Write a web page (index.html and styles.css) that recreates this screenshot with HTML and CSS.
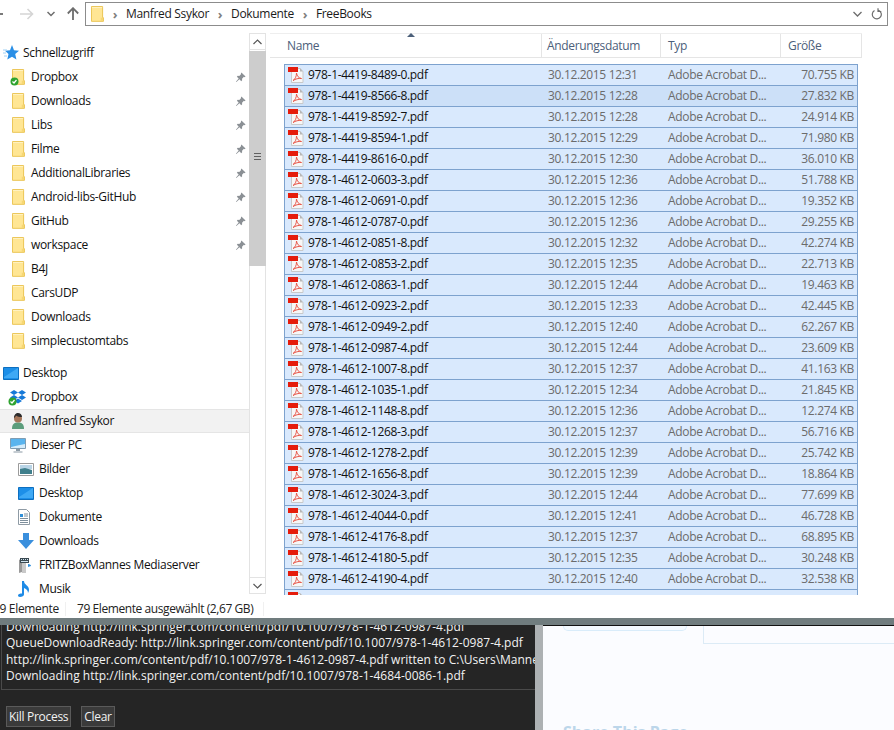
FILE: index.html
```html
<!DOCTYPE html>
<html lang="de">
<head>
<meta charset="utf-8">
<title>FreeBooks</title>
<link rel="stylesheet" href="styles.css">
</head>
<body>
<svg class="defs" width="0" height="0">
  <symbol id="folder" viewBox="0 0 14 17"><path d="M.5.5h12v12h.9v3.9H.5z" fill="#ffe694" stroke="#e9c04b"/><path d="M1 1h11v1H1z" fill="#fff3c4"/><path d="M10.5 12.5h2.6v3.4h-2.6z" fill="#f6d774"/></symbol>
  <symbol id="pdf" viewBox="0 0 16 16"><path d="M3.500 1.500h8.500l3 3v11h-11.500z" fill="#f7f7f7" stroke="#c9c9c9"/><path d="M12 1l3 3.500h-3z" fill="#b5b5b5"/><path d="M0 0h10v5H0z" fill="#e51c0c"/><path d="M5 13.500c2-1 3.500-4 3.500-7.500.5 3 2 5 5 5.500-3-.4-6 .4-8.500 2z" fill="none" stroke="#e9574a" stroke-width="1"/></symbol>
  <symbol id="pin" viewBox="0 0 12 12"><path d="M7 .5l4.500 4.500-1 .6-.8-.3-2 2 .1 1.700-1 1-2-2L1.500 11 1 10.500l3-3.300-2-2 1-1 1.700.1 2-2-.3-.8z" fill="#8b9095"/></symbol>
  <symbol id="star" viewBox="0 0 16 16"><path d="M9 0l2 5.300 5 .4-3.800 3.400 1.200 5.400L9 11.700 4.300 14.500l1.200-5.400L2 5.700l5-.4z" fill="#2a8fe6"/><path d="M0 5h4M0 8h3M1 11h3" stroke="#9fd0f5"/></symbol>
  <symbol id="check" viewBox="0 0 9 9"><circle cx="4.500" cy="4.500" r="4" fill="#2fa32f"/><path d="M2.500 4.500l1.500 1.500 2.500-3" stroke="#fff" fill="none" stroke-width="1.200"/></symbol>
  <symbol id="desk" viewBox="0 0 16 14"><path d="M.5 1.500h15v12H.5z" fill="#1d8fe8" stroke="#0d6fc0"/><path d="M1 11L15 2v10H1z" fill="#3fa9f5"/></symbol>
  <symbol id="box" viewBox="0 0 16 15"><path d="M4 0l4 2.500L4 5 0 2.500zM12 0l4 2.500L12 5 8 2.500zM4 5l4 2.500L4 10 0 7.500zM12 5l4 2.500L12 10 8 7.500zM8 8.500l4 2.500-4 2.500L4 11z" fill="#1679d8"/></symbol>
  <symbol id="user" viewBox="0 0 16 16"><path d="M2 16c0-5 2-6.500 6-6.500s6 1.500 6 6.500z" fill="#5c9d7c"/><circle cx="8" cy="5.500" r="4" fill="#a5765a"/><path d="M4 5c0-3.500 2-5 4-5s4 1.500 4 4c-2 0-5 0-6-1.500-.4 1-1 2-2 2.500z" fill="#2b2b2b"/></symbol>
  <symbol id="pc" viewBox="0 0 16 15"><path d="M.5.500h15v10H.5z" fill="#d4ecfb" stroke="#7f9db3"/><path d="M1 1h14v5C10 7 5 8 1 9z" fill="#59b4ee"/><path d="M6 11h4v2H6zM3.500 13.500h9v1h-9z" fill="#8b9aa5"/></symbol>
  <symbol id="pic" viewBox="0 0 16 13"><path d="M.5.500h15v12H.5z" fill="#fff" stroke="#9b9b9b"/><path d="M2 2h12v4H2z" fill="#b9d4e6"/><path d="M2 6l5-1 7 2v4H2z" fill="#3f7f8c"/></symbol>
  <symbol id="doc" viewBox="0 0 12 16"><path d="M.5.500h8l3 3v12H.5z" fill="#fff" stroke="#8f9ba5"/><path d="M2 5h3v3H2z" fill="#2f8fd8"/><path d="M6 5h4M6 7h4M2 9.500h8M2 11.500h8M2 13.500h8" stroke="#7e8f9c"/></symbol>
  <symbol id="down" viewBox="0 0 16 16"><path d="M5 0h6v7h5l-8 9-8-9h5z" fill="#3a8fdd"/></symbol>
  <symbol id="media" viewBox="0 0 14 17"><path d="M1 3l3-2v14l-3 1z" fill="#9a9a9a"/><path d="M4 1h4v15H4z" fill="#c9c9c9"/><path d="M2 1h9v5H2z" fill="#3b4a52"/><path d="M3 2h1v1H3zM5 2h1v1H5zM7 2h1v1H7zM9 2h1v1H9zM3 4h7v1H3z" fill="#cfe3ee"/><path d="M10 7c2 0 3 1 3 2l-3 1z" fill="#2e8fdc"/></symbol>
  <symbol id="note" viewBox="0 0 12 16"><path d="M4 0h2c0 4 5 4 5 9 0 1-.5 2-1 3 0-3-2-4-4-5v6.500c0 1.500-2 2.500-4 2.500-1.500 0-2-1-2-1.500C0 13 2 12.500 4 12.500z" fill="#1f8be6"/></symbol>
</svg>

<div class="window">
  <header class="toolbar">
    <div class="nav-buttons">
      <span class="back-stub"></span>
      <svg class="tb-icon tb-forward" width="14" height="12" viewBox="0 0 14 12"><path d="M0 6h12M7.500 1L12.500 6l-5 5" fill="none" stroke="#d5d5d5" stroke-width="1.600"/></svg>
      <svg class="tb-icon tb-recent" width="8" height="6" viewBox="0 0 8 6"><path d="M.5 1L4 4.500 7.500 1" fill="none" stroke="#6d6d6d" stroke-width="1.500"/></svg>
      <svg class="tb-icon tb-up" width="12" height="13" viewBox="0 0 12 13"><path d="M6 13V1.500M.8 6.500L6 1.200l5.200 5.300" fill="none" stroke="#6d6d6d" stroke-width="1.800"/></svg>
    </div>
    <div class="address">
      <svg class="addr-folder" width="13" height="16"><use href="#folder"/></svg>
      <span class="crumb-sep">›</span><span class="crumb">Manfred Ssykor</span>
      <span class="crumb-sep">›</span><span class="crumb">Dokumente</span>
      <span class="crumb-sep">›</span><span class="crumb">FreeBooks</span>
      <span class="addr-tools">
        <svg width="9" height="6" viewBox="0 0 9 6"><path d="M.5 1l4 4 4-4" fill="none" stroke="#6d6d6d" stroke-width="1.300"/></svg>
        <svg width="11" height="12" viewBox="0 0 11 12"><path d="M3.500 2.500a4.500 4.500 0 1 0 4-.3M7 .2v3.300h3.300" fill="none" stroke="#6d6d6d" stroke-width="1.200"/></svg>
      </span>
    </div>
  </header>

  <main class="explorer">
    <nav class="tree">
      <div class="tree-row lvl0"><svg class="ti" width="16" height="16"><use href="#star"/></svg><span>Schnellzugriff</span></div>
      <div class="tree-row lvl1 pinned"><span class="ti-wrap"><svg class="ti" width="13" height="16"><use href="#folder"/></svg><svg class="badge" width="9" height="9"><use href="#check"/></svg></span><span>Dropbox</span><svg class="pin" width="11" height="11"><use href="#pin"/></svg></div>
      <div class="tree-row lvl1 pinned"><svg class="ti" width="13" height="16"><use href="#folder"/></svg><span>Downloads</span><svg class="pin" width="11" height="11"><use href="#pin"/></svg></div>
      <div class="tree-row lvl1 pinned"><svg class="ti" width="13" height="16"><use href="#folder"/></svg><span>Libs</span><svg class="pin" width="11" height="11"><use href="#pin"/></svg></div>
      <div class="tree-row lvl1 pinned"><svg class="ti" width="13" height="16"><use href="#folder"/></svg><span>Filme</span><svg class="pin" width="11" height="11"><use href="#pin"/></svg></div>
      <div class="tree-row lvl1 pinned"><svg class="ti" width="13" height="16"><use href="#folder"/></svg><span>AdditionalLibraries</span><svg class="pin" width="11" height="11"><use href="#pin"/></svg></div>
      <div class="tree-row lvl1 pinned"><svg class="ti" width="13" height="16"><use href="#folder"/></svg><span>Android-libs-GitHub</span><svg class="pin" width="11" height="11"><use href="#pin"/></svg></div>
      <div class="tree-row lvl1 pinned"><svg class="ti" width="13" height="16"><use href="#folder"/></svg><span>GitHub</span><svg class="pin" width="11" height="11"><use href="#pin"/></svg></div>
      <div class="tree-row lvl1 pinned"><svg class="ti" width="13" height="16"><use href="#folder"/></svg><span>workspace</span><svg class="pin" width="11" height="11"><use href="#pin"/></svg></div>
      <div class="tree-row lvl1"><svg class="ti" width="13" height="16"><use href="#folder"/></svg><span>B4J</span></div>
      <div class="tree-row lvl1"><svg class="ti" width="13" height="16"><use href="#folder"/></svg><span>CarsUDP</span></div>
      <div class="tree-row lvl1"><svg class="ti" width="13" height="16"><use href="#folder"/></svg><span>Downloads</span></div>
      <div class="tree-row lvl1"><svg class="ti" width="13" height="16"><use href="#folder"/></svg><span>simplecustomtabs</span></div>
      <div class="tree-row lvl0 group-start"><svg class="ti" width="16" height="14"><use href="#desk"/></svg><span>Desktop</span></div>
      <div class="tree-row lvl1b"><span class="ti-wrap"><svg class="ti" width="16" height="15"><use href="#box"/></svg><svg class="badge" width="9" height="9"><use href="#check"/></svg></span><span>Dropbox</span></div>
      <div class="tree-row lvl1b current"><svg class="ti" width="16" height="16"><use href="#user"/></svg><span>Manfred Ssykor</span></div>
      <div class="tree-row lvl1b"><svg class="ti" width="16" height="15"><use href="#pc"/></svg><span>Dieser PC</span></div>
      <div class="tree-row lvl2"><svg class="ti" width="16" height="13"><use href="#pic"/></svg><span>Bilder</span></div>
      <div class="tree-row lvl2"><svg class="ti" width="16" height="14"><use href="#desk"/></svg><span>Desktop</span></div>
      <div class="tree-row lvl2"><svg class="ti" width="12" height="16"><use href="#doc"/></svg><span>Dokumente</span></div>
      <div class="tree-row lvl2"><svg class="ti" width="16" height="16"><use href="#down"/></svg><span>Downloads</span></div>
      <div class="tree-row lvl2"><svg class="ti" width="14" height="17"><use href="#media"/></svg><span>FRITZBoxMannes Mediaserver</span></div>
      <div class="tree-row lvl2"><svg class="ti" width="12" height="16"><use href="#note"/></svg><span>Musik</span></div>
    </nav>

    <div class="vscroll">
      <div class="sb-btn"><svg width="9" height="6" viewBox="0 0 9 6"><path d="M.5 5l4-4 4 4" fill="none" stroke="#555" stroke-width="1.200"/></svg></div>
      <div class="sb-thumb"><span class="grip"></span></div>
      <div class="sb-track"></div>
      <div class="sb-btn sb-btn-end"><svg width="9" height="6" viewBox="0 0 9 6"><path d="M.5 1l4 4 4-4" fill="none" stroke="#555" stroke-width="1.200"/></svg></div>
    </div>

    <section class="files">
      <div class="col-head">
        <div class="ch ch-name">Name<span class="sort"></span></div>
        <div class="ch ch-date">Änderungsdatum</div>
        <div class="ch ch-type">Typ</div>
        <div class="ch ch-size">Größe</div>
      </div>
      <div class="list">
        <div class="row"><svg class="fi" width="16" height="16"><use href="#pdf"/></svg><span class="n">978-1-4419-8489-0.pdf</span><span class="d">30.12.2015 12:31</span><span class="t">Adobe Acrobat D...</span><span class="s">70.755 KB</span></div>
        <div class="row focus"><svg class="fi" width="16" height="16"><use href="#pdf"/></svg><span class="n">978-1-4419-8566-8.pdf</span><span class="d">30.12.2015 12:28</span><span class="t">Adobe Acrobat D...</span><span class="s">27.832 KB</span></div>
        <div class="row"><svg class="fi" width="16" height="16"><use href="#pdf"/></svg><span class="n">978-1-4419-8592-7.pdf</span><span class="d">30.12.2015 12:28</span><span class="t">Adobe Acrobat D...</span><span class="s">24.914 KB</span></div>
        <div class="row"><svg class="fi" width="16" height="16"><use href="#pdf"/></svg><span class="n">978-1-4419-8594-1.pdf</span><span class="d">30.12.2015 12:29</span><span class="t">Adobe Acrobat D...</span><span class="s">71.980 KB</span></div>
        <div class="row"><svg class="fi" width="16" height="16"><use href="#pdf"/></svg><span class="n">978-1-4419-8616-0.pdf</span><span class="d">30.12.2015 12:30</span><span class="t">Adobe Acrobat D...</span><span class="s">36.010 KB</span></div>
        <div class="row"><svg class="fi" width="16" height="16"><use href="#pdf"/></svg><span class="n">978-1-4612-0603-3.pdf</span><span class="d">30.12.2015 12:36</span><span class="t">Adobe Acrobat D...</span><span class="s">51.788 KB</span></div>
        <div class="row"><svg class="fi" width="16" height="16"><use href="#pdf"/></svg><span class="n">978-1-4612-0691-0.pdf</span><span class="d">30.12.2015 12:36</span><span class="t">Adobe Acrobat D...</span><span class="s">19.352 KB</span></div>
        <div class="row"><svg class="fi" width="16" height="16"><use href="#pdf"/></svg><span class="n">978-1-4612-0787-0.pdf</span><span class="d">30.12.2015 12:36</span><span class="t">Adobe Acrobat D...</span><span class="s">29.255 KB</span></div>
        <div class="row"><svg class="fi" width="16" height="16"><use href="#pdf"/></svg><span class="n">978-1-4612-0851-8.pdf</span><span class="d">30.12.2015 12:32</span><span class="t">Adobe Acrobat D...</span><span class="s">42.274 KB</span></div>
        <div class="row"><svg class="fi" width="16" height="16"><use href="#pdf"/></svg><span class="n">978-1-4612-0853-2.pdf</span><span class="d">30.12.2015 12:35</span><span class="t">Adobe Acrobat D...</span><span class="s">22.713 KB</span></div>
        <div class="row"><svg class="fi" width="16" height="16"><use href="#pdf"/></svg><span class="n">978-1-4612-0863-1.pdf</span><span class="d">30.12.2015 12:44</span><span class="t">Adobe Acrobat D...</span><span class="s">19.463 KB</span></div>
        <div class="row"><svg class="fi" width="16" height="16"><use href="#pdf"/></svg><span class="n">978-1-4612-0923-2.pdf</span><span class="d">30.12.2015 12:33</span><span class="t">Adobe Acrobat D...</span><span class="s">42.445 KB</span></div>
        <div class="row"><svg class="fi" width="16" height="16"><use href="#pdf"/></svg><span class="n">978-1-4612-0949-2.pdf</span><span class="d">30.12.2015 12:40</span><span class="t">Adobe Acrobat D...</span><span class="s">62.267 KB</span></div>
        <div class="row"><svg class="fi" width="16" height="16"><use href="#pdf"/></svg><span class="n">978-1-4612-0987-4.pdf</span><span class="d">30.12.2015 12:44</span><span class="t">Adobe Acrobat D...</span><span class="s">23.609 KB</span></div>
        <div class="row"><svg class="fi" width="16" height="16"><use href="#pdf"/></svg><span class="n">978-1-4612-1007-8.pdf</span><span class="d">30.12.2015 12:37</span><span class="t">Adobe Acrobat D...</span><span class="s">41.163 KB</span></div>
        <div class="row"><svg class="fi" width="16" height="16"><use href="#pdf"/></svg><span class="n">978-1-4612-1035-1.pdf</span><span class="d">30.12.2015 12:34</span><span class="t">Adobe Acrobat D...</span><span class="s">21.845 KB</span></div>
        <div class="row"><svg class="fi" width="16" height="16"><use href="#pdf"/></svg><span class="n">978-1-4612-1148-8.pdf</span><span class="d">30.12.2015 12:36</span><span class="t">Adobe Acrobat D...</span><span class="s">12.274 KB</span></div>
        <div class="row"><svg class="fi" width="16" height="16"><use href="#pdf"/></svg><span class="n">978-1-4612-1268-3.pdf</span><span class="d">30.12.2015 12:37</span><span class="t">Adobe Acrobat D...</span><span class="s">56.716 KB</span></div>
        <div class="row"><svg class="fi" width="16" height="16"><use href="#pdf"/></svg><span class="n">978-1-4612-1278-2.pdf</span><span class="d">30.12.2015 12:39</span><span class="t">Adobe Acrobat D...</span><span class="s">25.742 KB</span></div>
        <div class="row"><svg class="fi" width="16" height="16"><use href="#pdf"/></svg><span class="n">978-1-4612-1656-8.pdf</span><span class="d">30.12.2015 12:39</span><span class="t">Adobe Acrobat D...</span><span class="s">18.864 KB</span></div>
        <div class="row"><svg class="fi" width="16" height="16"><use href="#pdf"/></svg><span class="n">978-1-4612-3024-3.pdf</span><span class="d">30.12.2015 12:44</span><span class="t">Adobe Acrobat D...</span><span class="s">77.699 KB</span></div>
        <div class="row"><svg class="fi" width="16" height="16"><use href="#pdf"/></svg><span class="n">978-1-4612-4044-0.pdf</span><span class="d">30.12.2015 12:41</span><span class="t">Adobe Acrobat D...</span><span class="s">46.728 KB</span></div>
        <div class="row"><svg class="fi" width="16" height="16"><use href="#pdf"/></svg><span class="n">978-1-4612-4176-8.pdf</span><span class="d">30.12.2015 12:37</span><span class="t">Adobe Acrobat D...</span><span class="s">68.895 KB</span></div>
        <div class="row"><svg class="fi" width="16" height="16"><use href="#pdf"/></svg><span class="n">978-1-4612-4180-5.pdf</span><span class="d">30.12.2015 12:35</span><span class="t">Adobe Acrobat D...</span><span class="s">30.248 KB</span></div>
        <div class="row"><svg class="fi" width="16" height="16"><use href="#pdf"/></svg><span class="n">978-1-4612-4190-4.pdf</span><span class="d">30.12.2015 12:40</span><span class="t">Adobe Acrobat D...</span><span class="s">32.538 KB</span></div>
        <div class="row"><svg class="fi" width="16" height="16"><use href="#pdf"/></svg></div>
      </div>
    </section>
  </main>

  <footer class="status">
    <span class="st-count">79 Elemente</span>
    <span class="st-sel">79 Elemente ausgewählt (2,67 GB)</span>
  </footer>
</div>

<div class="lower">
  <div class="console">
    <div class="log">
      <div class="log-clip">
        <p>Downloading http://link.springer.com/content/pdf/10.1007/978-1-4612-0987-4.pdf</p>
        <p>QueueDownloadReady: http://link.springer.com/content/pdf/10.1007/978-1-4612-0987-4.pdf</p>
        <p>http://link.springer.com/content/pdf/10.1007/978-1-4612-0987-4.pdf written to C:\Users\Mannes\Documents</p>
        <p>Downloading http://link.springer.com/content/pdf/10.1007/978-1-4684-0086-1.pdf</p>
      </div>
    </div>
    <div class="actions">
      <button class="btn">Kill Process</button>
      <button class="btn">Clear</button>
    </div>
  </div>
  <div class="splitter"></div>
  <div class="page">
    <div class="page-top">
      <div class="pill"></div>
      <div class="panel"></div>
    </div>
    <h2 class="share">Share This Page</h2>
  </div>
</div>
</body>
</html>
```

FILE: styles.css
```css
* { box-sizing: border-box; }
html, body { margin: 0; height: 730px; overflow: hidden; }
body {
  width: 894px;
  background: #fff;
  color: #111;
  font: 12px/16px "Open Sans", "Noto Sans", sans-serif;
  letter-spacing: -0.33px;
  display: flex;
  flex-direction: column;
}
.defs { position: absolute; }
svg { display: block; flex: none; }

.window { height: 618px; display: flex; flex-direction: column; overflow: hidden; }

/* toolbar */
.toolbar { height: 33px; padding-top: 2px; display: flex; align-items: flex-start; flex: none; }
.nav-buttons { width: 85px; height: 23px; display: flex; align-items: center; flex: none; }
.back-stub { width: 3px; height: 2px; background: #7a7a7a; }
.tb-forward { margin-left: 17px; }
.tb-recent { margin-left: 13px; }
.tb-up { margin-left: 12px; }
.address {
  width: 803px;
  height: 24px;
  border: 1px solid #8c8c8c;
  display: flex;
  align-items: center;
  padding-left: 5px;
  color: #1a1a1a;
}
.crumb-sep { width: 22px; text-align: center; color: #808080; font-size: 13px; font-weight: 700; }
.addr-tools { margin-left: auto; display: flex; align-items: center; gap: 9px; padding-right: 5px; }

/* main */
.explorer { flex: 1; display: flex; min-height: 0; }
.tree { width: 249px; flex: none; padding-top: 8px; overflow: hidden; }
.tree-row { height: 24px; display: flex; align-items: center; white-space: nowrap; position: relative; }
.lvl0 { padding-left: 3px; }
.lvl0 > svg { margin-right: 4px; }
.lvl1 { padding-left: 12px; }
.lvl1 .ti-wrap { width: 19px; }
.lvl1 > .ti { margin-right: 6px; }
.lvl1b { padding-left: 10px; }
.lvl1b > .ti, .lvl1b > .ti-wrap { margin-right: 5px; }
.lvl2 { padding-left: 18px; }
.lvl2 > span { position: absolute; left: 39px; }
.ti-wrap { position: relative; display: block; flex: none; }
.badge { position: absolute; left: -2px; bottom: -1px; }
.pin { position: absolute; left: 235px; top: 7px; }
.group-start { margin-top: 8px; }
.current { background: #f2f2f2; border-top: 1px solid #e5e5e5; border-bottom: 1px solid #e5e5e5; }

/* scrollbar */
.vscroll {
  width: 17px;
  flex: none;
  display: flex;
  flex-direction: column;
  margin-bottom: 6px;
  border-left: 1px solid #e3e3e3;
  border-right: 1px solid #e3e3e3;
}
.sb-btn { height: 17px; flex: none; display: flex; align-items: center; justify-content: center; background: #fff; border-top: 1px solid #e3e3e3; border-bottom: 1px solid #e3e3e3; }
.sb-thumb { height: 215px; background: #cdcdcd; flex: none; display: flex; justify-content: center; margin: 1px -1px 0; padding-top: 102px; }
.grip { width: 7px; height: 7px; border-top: 1px solid #606060; border-bottom: 1px solid #606060; background: linear-gradient(#cdcdcd 2px, #606060 2px, #606060 3px, #cdcdcd 3px); }
.sb-track { flex: 1; background: #fff; }

/* files */
.files { flex: 1; padding-left: 4px; min-width: 0; }
.col-head { display: flex; height: 25px; width: 592px; border-top: 1px solid #eee; border-bottom: 1px solid #e5e5e5; color: #4c607a; }
.ch { line-height: 23px; border-right: 1px solid #e5e5e5; position: relative; white-space: nowrap; }
.ch-name { width: 272px; padding-left: 17px; }
.ch-date { width: 119px; padding-left: 5px; }
.ch-type { width: 120px; padding-left: 7px; }
.ch-size { width: 81px; padding-left: 7px; }
.sort {
  position: absolute;
  left: 137px;
  top: -1px;
  width: 0;
  height: 0;
  border: 4px solid transparent;
  border-top: 0;
  border-bottom: 4px solid #4c607a;
}
.list {
  margin: 6px 0 0 14px;
  width: 574px;
  height: 531px;
  overflow: hidden;
  border-left: 1px solid #7da2ce;
  border-right: 1px solid #7da2ce;
}
.row {
  height: 21px;
  border-top: 1px solid #7da2ce;
  background: #d9e9fd;
  display: grid;
  grid-template-columns: 20px 240px 120px 120px 1fr;
  align-items: center;
  padding: 0 3px;
  white-space: nowrap;
  color: #6b6b6b;
}
.row.focus { background: #cce0f8; }
.n { color: #111; }
.s { text-align: right; }

/* status */
.status { height: 18px; flex: none; display: flex; align-items: center; color: #222; overflow: hidden; }
.st-count { width: 73px; margin-left: -7px; flex: none; border-right: 1px solid #f0f0f0; height: 14px; line-height: 14px; }
.st-sel { margin-left: 11px; padding-right: 10px; border-right: 1px solid #f0f0f0; height: 14px; line-height: 14px; letter-spacing: -0.42px; }

/* lower */
.lower { flex: 1; display: flex; border-top: 7px solid #707c7e; min-height: 0; overflow: hidden; }
.console { width: 535px; flex: none; background: #252525; color: #f2f2f2; display: flex; flex-direction: column; overflow: hidden; letter-spacing: 0; }
.log { height: 65px; margin-left: 1px; border-left: 1px solid #4a4a4a; border-bottom: 1px solid #4a4a4a; overflow: hidden; flex: none; }
.log-clip { margin-top: -6px; padding-left: 4px; }
.log p { margin: 0; line-height: 16.4px; white-space: nowrap; }
.actions { display: flex; gap: 10px; padding: 16px 0 0 6px; }
.btn {
  height: 21px;
  padding: 0 2px;
  background: #3a3a3a;
  border: 1px solid #5a5a5a;
  color: #f2f2f2;
  font: inherit;
  letter-spacing: -0.3px;
}
.splitter { width: 8px; flex: none; background: #adb1b3; }
.page { flex: 1; background: #fbfcff; border-top: 1px solid #111; padding-left: 20px; min-width: 0; overflow: hidden; }
.page-top { display: flex; height: 96px; align-items: flex-start; }
.pill { width: 124px; height: 5px; border: 1px solid #d9ecfa; border-top: 0; border-radius: 0 0 6px 6px; background: #f4faff; flex: none; }
.panel { margin-left: 16px; flex: 1; height: 18px; border: 1px solid #dcebf6; border-top: 0; border-right: 0; }
.share { margin: 0; font: 700 16px/20px "Open Sans", sans-serif; letter-spacing: 0; color: #bcd6ea; }
```
